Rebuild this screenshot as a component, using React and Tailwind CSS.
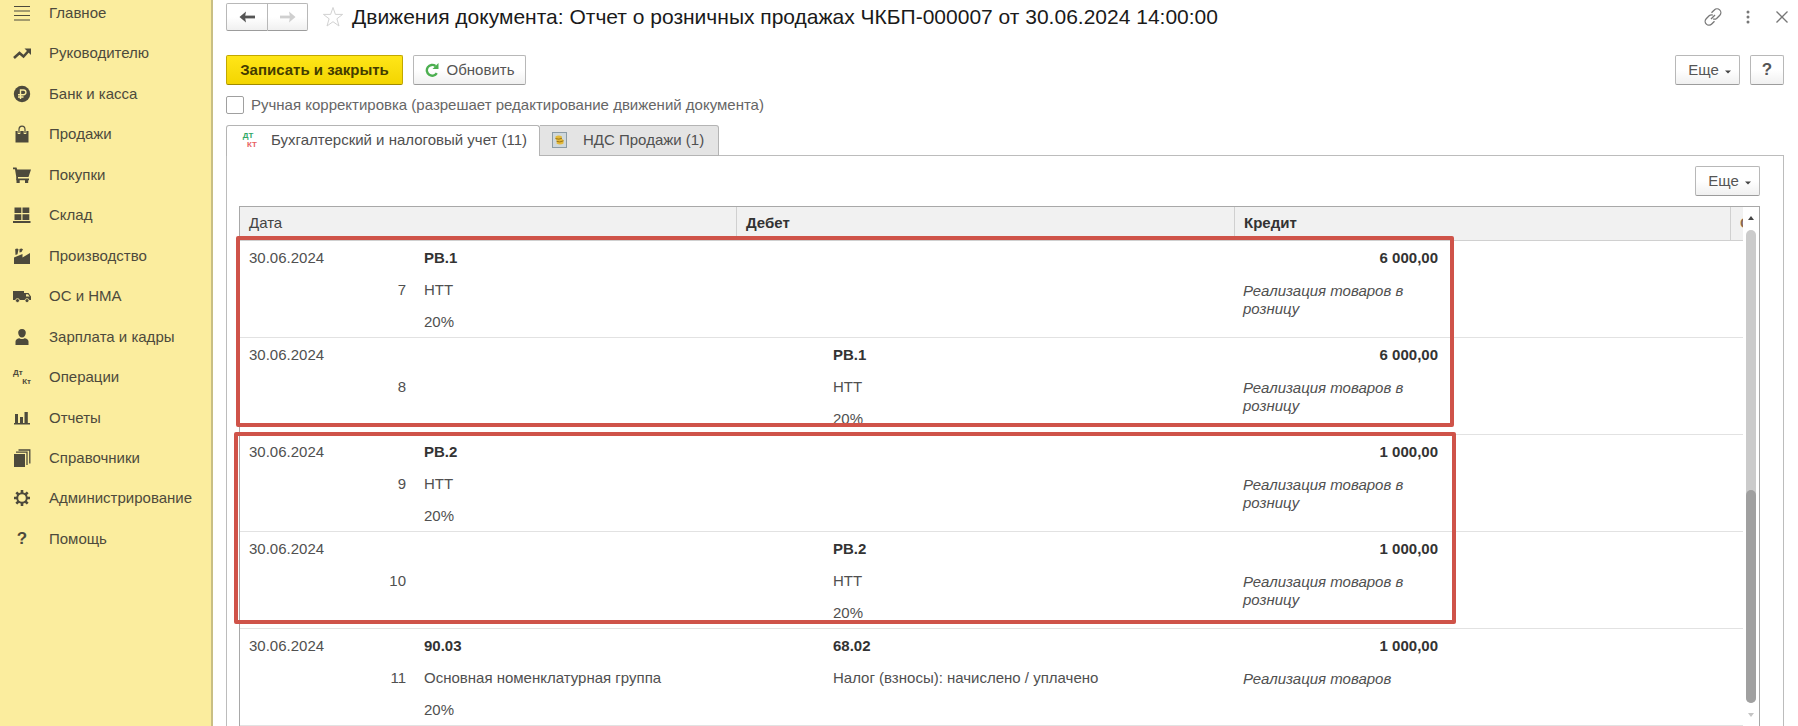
import React, { useState } from 'react';

const MenuIcon = () => (
    <svg viewBox="0 0 18 18" className="w-[18px] h-[18px]" stroke="currentColor" strokeWidth="1.2">
        <path d="M1 2.5H17M1 7H17M1 11.5H17M1 16H17" />
    </svg>
);

const TrendIcon = () => (
    <svg viewBox="0 0 18 18" className="w-[18px] h-[18px]" fill="none">
        <path d="M1 14L6.5 9L10.5 12.5L15.5 7" stroke="currentColor" strokeWidth="2.6" />
        <path d="M11.5 4.5H18V11Z" fill="currentColor" />
    </svg>
);

const RubleIcon = () => (
    <svg viewBox="0 0 18 18" className="w-[18px] h-[18px]" fill="none">
        <circle cx="9" cy="9" r="8.2" fill="currentColor" />
        <path d="M7.5 14V5H10.5A2.4 2.4 0 0 1 10.5 9.8H5M5 12H10.5" stroke="#fbed9e" strokeWidth="1.4" />
    </svg>
);

const BagIcon = () => (
    <svg viewBox="0 0 18 18" className="w-[18px] h-[18px]" fill="none">
        <path d="M2.5 6H15.5V17.5H2.5Z" fill="currentColor" />
        <path d="M6 9V5A3 3.6 0 0 1 12 5V9" stroke="#fbed9e" strokeWidth="2.6" />
        <path d="M6 8V4.5A3 3.4 0 0 1 12 4.5V8" stroke="currentColor" strokeWidth="1.2" />
    </svg>
);

const CartIcon = () => (
    <svg viewBox="0 0 18 18" className="w-[18px] h-[18px]" fill="currentColor">
        <path d="M0 1.5H3.5L4.2 3.5H18L15.5 11H5V12.5H16V14.2H3.2V10.5L2 3.2H0Z" />
        <rect x="3.5" y="13.5" width="3.2" height="3.5" />
        <rect x="12" y="13.5" width="3.2" height="3.5" />
    </svg>
);

const WarehouseIcon = () => (
    <svg viewBox="0 0 18 18" className="w-[18px] h-[18px]" fill="currentColor">
        <path d="M1.5 1.5H8.3V7H1.5ZM9.5 1.5H16.3V7H9.5ZM1.5 8.2H8.3V14H1.5ZM9.5 8.2H16.3V14H9.5ZM0 15H17.5V17H0Z" />
    </svg>
);

const FactoryIcon = () => (
    <svg viewBox="0 0 18 18" className="w-[18px] h-[18px]" fill="currentColor">
        <path d="M1 17V10.5L9.5 7V10.5L17 6V17Z" />
        <path d="M2.5 8L2.2 2L4.2 1.5L5.5 2.2L4.5 7.2ZM6.5 5.5V2L8.5 1.5L10 2.3L8.5 5Z" />
    </svg>
);

const TruckIcon = () => (
    <svg viewBox="0 0 18 18" className="w-[18px] h-[18px]">
        <path d="M0 4H11V13H0ZM11 6H15.5L18 9.5V13H11Z" fill="currentColor" />
        <path d="M13 7.3H15L16.6 9.5H13Z" fill="#fbed9e" />
        <circle cx="4.5" cy="13.6" r="2" fill="currentColor" stroke="#fbed9e" strokeWidth="0.8" />
        <circle cx="14" cy="13.6" r="2" fill="currentColor" stroke="#fbed9e" strokeWidth="0.8" />
    </svg>
);

const PersonIcon = () => (
    <svg viewBox="0 0 18 18" className="w-[18px] h-[18px]" fill="currentColor">
        <path d="M9 1C11.6 1 13 2.8 12.8 5C12.6 7.6 11 9.5 9 9.5S5.4 7.6 5.2 5C5 2.8 6.4 1 9 1Z" />
        <path d="M2.5 17V13.5C2.5 11.5 4.5 10.5 6.5 10.2Q9 12 11.5 10.2C13.5 10.5 15.5 11.5 15.5 13.5V17Z" />
    </svg>
);

const DtKtIcon = () => (
    <span className="flex w-[18px] flex-col text-[8px] font-bold leading-[9px]" aria-hidden="true">
        <span>Дт</span>
        <span className="self-end">Кт</span>
    </span>
);

const ChartIcon = () => (
    <svg viewBox="0 0 18 18" className="w-[18px] h-[18px]" fill="currentColor">
        <path d="M1 14H17V15.5H1ZM2 5H5V14H2ZM7 8H10V14H7ZM11.5 3H14.8V14H11.5Z" />
    </svg>
);

const BooksIcon = () => (
    <svg viewBox="0 0 18 18" className="w-[18px] h-[18px]" fill="none">
        <path d="M1 5H12V18H1Z" fill="currentColor" />
        <path d="M3 3.2H14V16M5.5 1H16.8V14.5" stroke="currentColor" strokeWidth="1.3" />
    </svg>
);

const GearIcon = () => (
    <svg viewBox="0 0 18 18" className="w-[18px] h-[18px]" fill="none" stroke="currentColor">
        <circle cx="9" cy="9" r="4.8" strokeWidth="2" />
        <path
            d="M9 1V4M9 14V17M1 9H4M14 9H17M3.3 3.3L5.5 5.5M12.5 12.5L14.7 14.7M14.7 3.3L12.5 5.5M5.5 12.5L3.3 14.7"
            strokeWidth="2.6"
        />
    </svg>
);

const HelpIcon = () => <span className="w-[18px] text-center text-[17px] font-bold leading-5">?</span>;

const menuItems = [
    { label: 'Главное', icon: MenuIcon },
    { label: 'Руководителю', icon: TrendIcon },
    { label: 'Банк и касса', icon: RubleIcon },
    { label: 'Продажи', icon: BagIcon },
    { label: 'Покупки', icon: CartIcon },
    { label: 'Склад', icon: WarehouseIcon },
    { label: 'Производство', icon: FactoryIcon },
    { label: 'ОС и НМА', icon: TruckIcon },
    { label: 'Зарплата и кадры', icon: PersonIcon },
    { label: 'Операции', icon: DtKtIcon },
    { label: 'Отчеты', icon: ChartIcon },
    { label: 'Справочники', icon: BooksIcon },
    { label: 'Администрирование', icon: GearIcon },
    { label: 'Помощь', icon: HelpIcon },
];

const entries = [
    { id: 7, date: '30.06.2024', debit: ['РВ.1', 'НТТ', '20%'], credit: [], sum: '6 000,00', note: 'Реализация товаров в розницу' },
    { id: 8, date: '30.06.2024', debit: [], credit: ['РВ.1', 'НТТ', '20%'], sum: '6 000,00', note: 'Реализация товаров в розницу' },
    { id: 9, date: '30.06.2024', debit: ['РВ.2', 'НТТ', '20%'], credit: [], sum: '1 000,00', note: 'Реализация товаров в розницу' },
    { id: 10, date: '30.06.2024', debit: [], credit: ['РВ.2', 'НТТ', '20%'], sum: '1 000,00', note: 'Реализация товаров в розницу' },
    {
        id: 11,
        date: '30.06.2024',
        debit: ['90.03', 'Основная номенклатурная группа', '20%'],
        credit: ['68.02', 'Налог (взносы): начислено / уплачено'],
        sum: '1 000,00',
        note: 'Реализация товаров',
    },
];

const buttonStyle =
    'flex items-center justify-center rounded-[2px] border border-[#b8b8b8] border-b-[#9c9c9c] bg-linear-to-b from-white from-50% to-[#f0f0f0] text-[#555]';

const MoreButton = () => (
    <button type="button" className={`${buttonStyle} h-[30px] w-[65px] gap-[6px] pl-1`}>
        Еще
        <svg viewBox="0 0 6 4" className="mt-1 h-1 w-[6px]" fill="#444">
            <path d="M0 0.5H6L3 3.5Z" />
        </svg>
    </button>
);

const Account = ({ lines }) => (
    <div className="h-[95px]">
        {lines.map((line, i) => (
            <div key={i} className={`h-8 leading-8 ${i === 0 ? 'font-bold text-[#333]' : ''}`}>
                {line}
            </div>
        ))}
    </div>
);

const Sidebar = () => (
    <nav className="w-[213px] shrink-0 border-r-2 border-[#c9bf84] bg-[#fbed9e]">
        <ul className="flex h-[552px] flex-col justify-between">
            {menuItems.map(({ label, icon: Icon }) => (
                <li key={label}>
                    <a href="#" className="flex h-[26px] items-center gap-[18px] pl-[13px] text-[#4d4a3c]">
                        <Icon />
                        <span>{label}</span>
                    </a>
                </li>
            ))}
        </ul>
    </nav>
);

const EntriesTable = () => (
    <div className="relative flex flex-1 border border-b-0 border-[#a8a8a8]">
        <div className="min-w-0 flex-1">
            <table className="w-full table-fixed border-separate border-spacing-0 text-left">
                <colgroup>
                    <col className="w-[175px]" />
                    <col className="w-[322px]" />
                    <col className="w-[87px]" />
                    <col className="w-[411px]" />
                    <col className="w-[211px]" />
                    <col />
                    <col className="w-[12px]" />
                </colgroup>
                <thead>
                    <tr className="h-[34px] bg-[#f1f1f1] text-[#444]">
                        <th colSpan={2} className="border-r border-b border-[#d0d0d0] pb-[2px] pl-[9px] font-normal">Дата</th>
                        <th colSpan={2} className="border-r border-b border-[#d0d0d0] pb-[2px] pl-[9px] font-bold text-[#333]">Дебет</th>
                        <th colSpan={2} className="border-r border-b border-[#d0d0d0] pb-[2px] pl-[9px] font-bold text-[#333]">Кредит</th>
                        <th className="overflow-hidden border-b border-[#d0d0d0] pb-[2px] pl-[9px] font-bold text-[#8a6a50]">С</th>
                    </tr>
                </thead>
                <tbody>
                    {entries.map((entry) => (
                        <tr key={entry.id} className="h-[97px] align-top">
                            <td className="border-b border-[#e2e2e2] pt-px pr-[9px] pl-[9px]">
                                <div className="h-8 leading-8">{entry.date}</div>
                                <div className="h-8 text-right leading-8">{entry.id}</div>
                            </td>
                            <td colSpan={2} className="border-b border-[#e2e2e2] pt-px pl-[9px]">
                                <Account lines={entry.debit} />
                            </td>
                            <td className="border-b border-[#e2e2e2] pt-px pl-[9px]">
                                <Account lines={entry.credit} />
                            </td>
                            <td className="border-b border-[#e2e2e2] pt-px pr-2 pl-2">
                                <div className="h-8 text-right leading-8 font-bold text-[#333]">{entry.sum}</div>
                                <div className="pt-2 leading-[18px] italic">{entry.note}</div>
                            </td>
                            <td colSpan={2} className="border-b border-[#e2e2e2]"></td>
                        </tr>
                    ))}
                </tbody>
            </table>
        </div>

        <div className="flex w-4 shrink-0 flex-col items-center pt-[9px] pb-[9px]">
            <svg viewBox="0 0 6 4" className="h-1 w-[6px]" fill="#444">
                <path d="M0 4L3 0L6 4Z" />
            </svg>
            <div className="mt-[10px] mb-[10px] flex w-[10px] flex-1 flex-col justify-end rounded-full bg-[#cbcbcb]">
                <div className="h-[45%] rounded-full bg-[#a0a0a0]"></div>
            </div>
            <svg viewBox="0 0 6 4" className="h-1 w-[6px]" fill="#c4c4c4">
                <path d="M0 0H6L3 4Z" />
            </svg>
        </div>

        {/* highlight frames around the paired entries */}
        <div className="pointer-events-none absolute top-[29px] -left-[4px] h-[191px] w-[1218px] rounded-[2px] border-4 border-[#cf5349]"></div>
        <div className="pointer-events-none absolute top-[225px] -left-[6px] h-[192px] w-[1222px] rounded-[2px] border-4 border-[#cf5349]"></div>
    </div>
);

const App = () => {
    const [manual, setManual] = useState(false);

    return (
        <div className="flex h-screen overflow-hidden bg-white font-['Liberation_Sans',Arial,sans-serif] text-[15px] leading-5 text-[#505050]">
            <Sidebar />

            <main className="flex min-w-0 flex-1 flex-col pt-[3px] pr-[14px] pl-[13px]">
                <header className="flex h-7 items-center">
                    <div className="flex">
                        <button type="button" aria-label="Назад" className={`${buttonStyle} h-7 w-[42px] rounded-r-none`}>
                            <svg viewBox="0 0 16 12" className="h-3 w-4" fill="none" stroke="#555" strokeWidth="2.8">
                                <path d="M16 6H4" />
                                <path d="M7 0.5L0.5 6L7 11.5L6 6Z" fill="#555" stroke="none" />
                            </svg>
                        </button>
                        <button type="button" aria-label="Вперед" className={`${buttonStyle} h-7 w-[40px] rounded-l-none border-l-0`}>
                            <svg viewBox="0 0 16 12" className="h-3 w-4" fill="none" stroke="#cfcfcf" strokeWidth="2.8">
                                <path d="M0 6H12" />
                                <path d="M9 0.5L15.5 6L9 11.5L10 6Z" fill="#cfcfcf" stroke="none" />
                            </svg>
                        </button>
                    </div>
                    <svg viewBox="0 0 22 22" className="ml-[14px] h-[22px] w-[22px]" fill="none" stroke="#d2d2d2">
                        <path d="M11 1.5L13.4 8.4H20.6L14.9 12.8L17 20L11 15.7L5 20L7.1 12.8L1.4 8.4H8.6Z" />
                    </svg>
                    <h1 className="ml-2 text-[21px] leading-7 text-[#1a1a1a]">
                        Движения документа: Отчет о розничных продажах ЧКБП-000007 от 30.06.2024 14:00:00
                    </h1>
                    <div className="-mr-1 ml-auto flex items-center text-[#777]">
                        <button type="button" aria-label="Ссылка">
                            <svg viewBox="0 0 18 18" className="h-[18px] w-[18px]" fill="none" stroke="currentColor" strokeWidth="1.3">
                                <path d="M7.5 4.8L10.3 2A3.6 3.6 0 0 1 15.8 7.2L12.6 10.4A3.4 3.4 0 0 1 9.2 10.8M10.5 13.2L7.7 16A3.6 3.6 0 0 1 2.2 10.8L5.4 7.6A3.4 3.4 0 0 1 8.8 7.2M7 11L11 7" />
                            </svg>
                        </button>
                        <button type="button" aria-label="Меню" className="ml-6">
                            <svg viewBox="0 0 4 14" className="h-[14px] w-1" fill="currentColor">
                                <circle cx="2" cy="2" r="1.5" />
                                <circle cx="2" cy="7" r="1.5" />
                                <circle cx="2" cy="12" r="1.5" />
                            </svg>
                        </button>
                        <button type="button" aria-label="Закрыть" className="ml-[26px]">
                            <svg viewBox="0 0 12 12" className="h-3 w-3" stroke="currentColor" strokeWidth="1.3">
                                <path d="M0.5 0.5L11.5 11.5M11.5 0.5L0.5 11.5" />
                            </svg>
                        </button>
                    </div>
                </header>

                <div className="mt-6 flex gap-[10px]">
                    <button
                        type="button"
                        className="h-[30px] w-[177px] rounded-[2px] border border-[#c2a800] border-b-[#a08a00] bg-linear-to-b from-[#ffe617] to-[#f3d500] font-bold text-[#443c00]"
                    >
                        Записать и закрыть
                    </button>
                    <button type="button" className={`${buttonStyle} h-[30px] w-[113px] gap-2`}>
                        <svg viewBox="0 0 14 14" className="h-[14px] w-[14px]" fill="none">
                            <path d="M11.8 10.2A5.4 5.4 0 1 1 10.5 3" stroke="#4caf50" strokeWidth="2.4" />
                            <path d="M13.5 0V6H7.5Z" fill="#4caf50" />
                        </svg>
                        Обновить
                    </button>
                    <div className="ml-auto flex gap-[10px]">
                        <MoreButton />
                        <button type="button" className={`${buttonStyle} h-[30px] w-[34px] text-[17px] font-bold`}>?</button>
                    </div>
                </div>

                <div className="mt-[10px] flex h-5 items-center">
                    <input
                        id="manual"
                        type="checkbox"
                        checked={manual}
                        onChange={(e) => setManual(e.target.checked)}
                        className="h-[18px] w-[18px] appearance-none rounded-[2px] border border-[#a0a0a0] bg-white checked:bg-[#fbe000]"
                    />
                    <label htmlFor="manual" className="pl-[7px] text-[#666]">
                        Ручная корректировка (разрешает редактирование движений документа)
                    </label>
                </div>

                <div className="relative z-10 mt-[10px] -mb-px flex" role="tablist">
                    <button
                        type="button"
                        role="tab"
                        aria-selected="true"
                        className="flex h-[31px] w-[314px] items-center gap-[14px] rounded-t-[3px] border border-b-0 border-[#b4b4b4] bg-white pb-[2px] pl-3"
                    >
                        <span className="flex w-[18px] flex-col text-[8px] leading-[9px] font-bold" aria-hidden="true">
                            <span className="text-[#2fa866]">ДТ</span>
                            <span className="self-end text-[#e8605e]">КТ</span>
                        </span>
                        Бухгалтерский и налоговый учет (11)
                    </button>
                    <button
                        type="button"
                        role="tab"
                        aria-selected="false"
                        className="flex h-[31px] w-[179px] items-center gap-4 rounded-tr-[3px] border border-l-0 border-[#b4b4b4] bg-[#e4e4e4] pb-px pl-3"
                    >
                        <svg viewBox="0 0 15 16" className="h-4 w-[15px]">
                            <rect x="0.5" y="0.5" width="14" height="15" fill="#cfd8dc" stroke="#8b9ba5" />
                            <path d="M3.5 4.5Q6.5 2.5 10 4.5L9.5 6.5L11.5 8V11.5Q8 13.5 4.5 11.5L5 9L3.5 7Z" fill="#e3b93a" />
                            <path d="M3.5 6.5Q7 8 10 6.2M4.5 9.3Q7.5 10.8 11.5 8.8" fill="none" stroke="#9a7415" />
                        </svg>
                        НДС Продажи (1)
                    </button>
                </div>

                <section className="flex flex-1 flex-col border border-b-0 border-[#bcbcbc] pt-[10px] pr-[23px] pl-3">
                    <div className="mb-[10px] flex justify-end">
                        <MoreButton />
                    </div>
                    <EntriesTable />
                </section>
            </main>
        </div>
    );
};

export default App;
